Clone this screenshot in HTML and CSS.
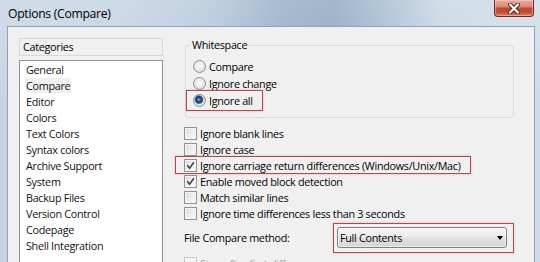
FILE: index.html
```html
<!DOCTYPE html>
<html>
<head>
<meta charset="utf-8">
<link rel="stylesheet" href="styles.css">
</head>
<body>
<div class="window">
  <div class="titlebar">
    <span class="title">Options (Compare)</span>
    <span class="close"><svg width="14" height="11" viewBox="0 0 14 11"><path d="M3 1.5 L11 9.5 M11 1.5 L3 9.5" stroke="#5a2219" stroke-width="4" stroke-linecap="round"/><path d="M3 1.5 L11 9.5 M11 1.5 L3 9.5" stroke="#ffffff" stroke-width="2.2" stroke-linecap="round"/></svg></span>
  </div>
  <div class="client">
    <div class="left">
      <div class="cat-head">Categories</div>
      <ul class="cat-list">
        <li>General</li>
        <li><span class="sel">Compare</span></li>
        <li>Editor</li>
        <li>Colors</li>
        <li>Text Colors</li>
        <li>Syntax colors</li>
        <li>Archive Support</li>
        <li>System</li>
        <li>Backup Files</li>
        <li>Version Control</li>
        <li>Codepage</li>
        <li>Shell Integration</li>
      </ul>
    </div>
    <div class="right">
      <fieldset class="group">
        <legend>Whitespace</legend>
        <div class="opt"><span class="radio"></span>Compare</div>
        <div class="opt"><span class="radio"></span>Ignore change</div>
        <div class="opt hl hl-radio"><span class="radio on"></span>Ignore all</div>
      </fieldset>
      <div class="checks">
        <div class="chk"><span class="box"></span>Ignore blank lines</div>
        <div class="chk"><span class="box"></span>Ignore case</div>
        <div class="chk hl hl-chk"><span class="box"><svg width="9" height="9" viewBox="0 0 9 9"><path d="M1.2 4.2 L3.6 7.2 L7.9 1.2" fill="none" stroke="#3a4656" stroke-width="1.6"/></svg></span>Ignore carriage return differences (Windows/Unix/Mac)</div>
        <div class="chk"><span class="box"><svg width="9" height="9" viewBox="0 0 9 9"><path d="M1.2 4.2 L3.6 7.2 L7.9 1.2" fill="none" stroke="#3a4656" stroke-width="1.6"/></svg></span>Enable moved block detection</div>
        <div class="chk"><span class="box"></span>Match similar lines</div>
        <div class="chk"><span class="box"></span>Ignore time differences less than 3 seconds</div>
      </div>
      <div class="method">
        <span class="method-label">File Compare method:</span>
        <div class="combo hl hl-combo"><span>Full Contents</span><span class="arrow"></span></div>
      </div>
      <div class="chk disabled"><span class="box"></span>Stop after first difference</div>
    </div>
  </div>
</div>
</body>
</html>
```

FILE: styles.css
```css
body {
  margin: 0;
}

.window {
  width: 540px;
  height: 262px;
  box-sizing: border-box;
  padding: 0 5px 0 7px;
  display: flex;
  flex-direction: column;
  overflow: hidden;
  background:
    linear-gradient(180deg, rgba(255,255,255,0.18), rgba(255,255,255,0) 40%),
    linear-gradient(90deg, #c6d5e3 0%, #c3d3e2 22%, #b6c8da 38%, #97aec6 52%, #8fa8c0 62%, #a9bed2 72%, #c8d7e5 82%, #cfdce8 100%);
  font-family: "Open Sans", "Noto Sans", sans-serif;
  font-size: 10.8px;
  letter-spacing: -0.3px;
  color: #000;
}

.titlebar {
  height: 26px;
  flex: none;
  display: flex;
  justify-content: space-between;
  align-items: flex-start;
}

.title {
  font-size: 12.2px;
  letter-spacing: -0.3px;
  line-height: 27px;
  padding-left: 1px;
  color: #000;
}

.close {
  width: 40px;
  height: 17px;
  margin-right: 1px;
  box-sizing: border-box;
  border: 1px solid #6a2b22;
  border-top: none;
  border-radius: 0 0 4px 4px;
  background: linear-gradient(180deg, #e9ad9d 0%, #dc8c79 40%, #c24a32 52%, #c4492f 72%, #db7a5f 100%);
  box-shadow: inset 0 0 0 1px rgba(255,220,210,0.45);
  display: flex;
  align-items: center;
  justify-content: center;
}

.client {
  flex: 1;
  min-height: 0;
  background: #f0f0f0;
  border: 1px solid #8ea1b5;
  border-bottom: none;
  padding: 11px 0 0 11px;
  display: flex;
  gap: 21px;
  overflow: hidden;
}

.left {
  width: 144px;
  flex: none;
  display: flex;
  flex-direction: column;
}

.cat-head {
  height: 18px;
  box-sizing: border-box;
  border: 1px solid #d2d9df;
  padding-left: 3px;
  line-height: 16px;
}

.cat-list {
  flex: 1;
  margin: 4px 0 -4px;
  padding: 1px 0 0;
  list-style: none;
  background: #fff;
  border: 1px solid #8e9196;
}

.cat-list li {
  line-height: 16px;
  padding-left: 6px;
  color: #111;
}

.sel {
  background: #f0f0f0;
  margin-left: -1px;
  padding: 0 1px;
}

.right {
  width: 330px;
  flex: none;
}

.group {
  margin: 0 0 0 1px;
  padding: 6px 0 8px 7px;
  border: 1px solid #d5dce2;
  border-radius: 3px;
  min-width: 0;
}

.group legend {
  margin-left: -3px;
  padding: 0 2px;
  line-height: 14px;
}

.opt {
  display: flex;
  align-items: center;
  height: 17px;
  width: fit-content;
  position: relative;
}

.radio {
  width: 13px;
  height: 13px;
  box-sizing: border-box;
  border-radius: 50%;
  border: 1px solid #8f9193;
  background: radial-gradient(circle at 50% 45%, #ffffff 0%, #ececec 45%, #cfcfcf 100%);
  margin-right: 3px;
  flex: none;
}

.radio.on {
  background: radial-gradient(circle at 45% 42%, #9cc0e0 0, #2f6396 1.6px, #163a62 3.2px, #7c93aa 4.2px, #e6e6e6 4.8px, #d2d2d2 100%);
}

.checks {
  margin-top: 7px;
}

.chk {
  display: flex;
  align-items: center;
  height: 16px;
  width: fit-content;
  position: relative;
}

.box {
  width: 13px;
  height: 13px;
  box-sizing: border-box;
  border: 1px solid #8f9193;
  background: linear-gradient(135deg, #d9d9d9 0%, #f0f0f0 60%, #fbfbfb 100%);
  box-shadow: inset 0 0 0 1px #f5f5f5;
  margin-right: 3px;
  flex: none;
  display: flex;
  align-items: center;
  justify-content: center;
}

.method {
  display: flex;
  align-items: center;
  margin-top: 6px;
}

.method-label {
  width: 153px;
  flex: none;
}

.combo {
  width: 170px;
  height: 21px;
  box-sizing: border-box;
  border: 1px solid #7f7f7f;
  border-radius: 3px;
  background: linear-gradient(180deg, #f4f4f4 0%, #ececec 45%, #e0e0e0 55%, #d6d6d6 100%);
  box-shadow: inset 0 0 0 1px rgba(255,255,255,0.6);
  display: flex;
  align-items: center;
  justify-content: space-between;
  padding: 0 3px 0 2px;
  position: relative;
}

.arrow {
  width: 0;
  height: 0;
  border-left: 3.5px solid transparent;
  border-right: 3.5px solid transparent;
  border-top: 4px solid #000;
}

.chk.disabled {
  margin-top: 7px;
  color: #a3a3a3;
}

.chk.disabled .box {
  border-color: #c8c8c8;
  background: #f4f4f4;
}

.hl::after {
  content: "";
  position: absolute;
  border: 1px solid #b9464f;
  box-shadow: 0 0 2px rgba(225, 120, 125, 0.55);
  pointer-events: none;
}

.hl-radio::after {
  inset: -2px -10px -2px -7px;
}

.hl-chk::after {
  inset: -1px -10px -1px -9px;
}

.hl-combo::after {
  inset: -5px -8px -6px -5px;
}
```
